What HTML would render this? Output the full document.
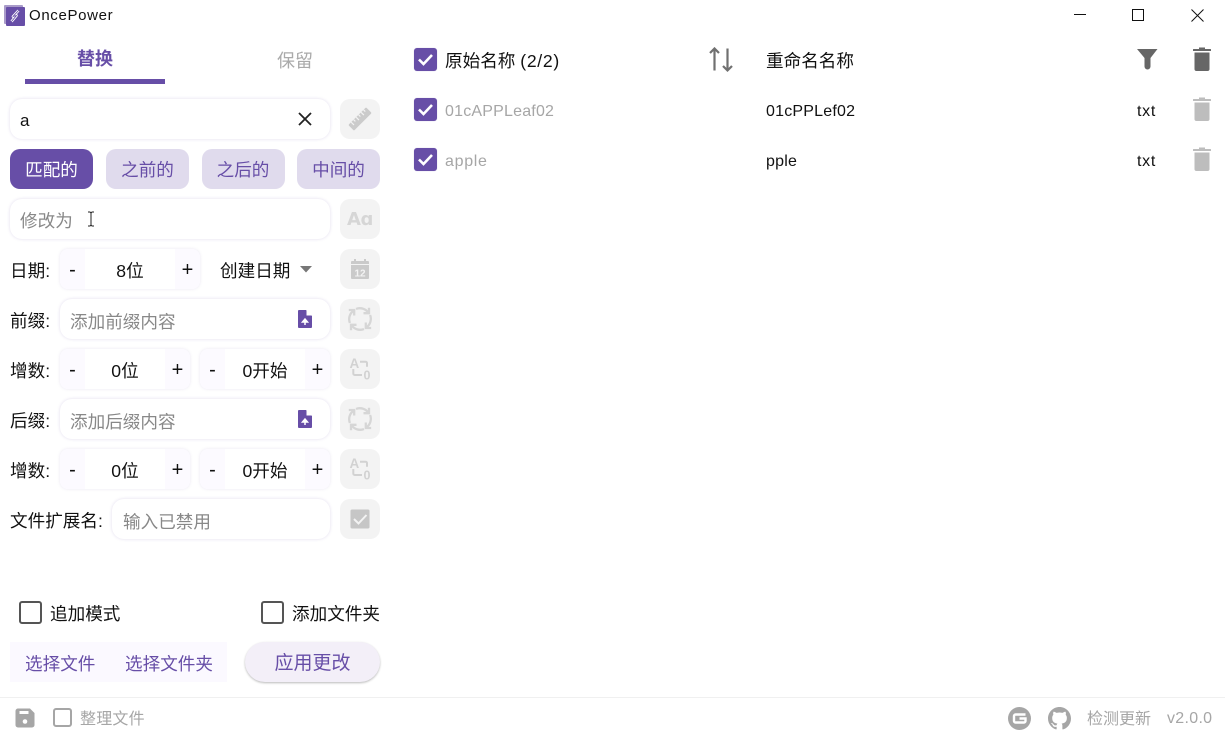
<!DOCTYPE html>
<html lang="zh"><head><meta charset="utf-8"><style>
html,body{margin:0;padding:0;width:1225px;height:736px;overflow:hidden;background:#fff}
body{position:relative;font-family:"Liberation Sans","Noto Sans CJK SC",sans-serif;font-size:17.6px;color:#111;font-weight:400}
.a{position:absolute;white-space:nowrap}
.t{position:absolute;white-space:nowrap;line-height:24px;height:24px}
.in{position:absolute;background:#fff;border-radius:12px;box-shadow:0 0 3px rgba(103,80,164,.2);height:40px}
.sq{position:absolute;left:340px;width:40px;height:40px;border-radius:10px;background:#f3f3f3}
.sq svg{position:absolute;left:0;top:0}
.b{position:absolute;top:149px;height:40px;width:83px;border-radius:10px;background:#e0dbed;color:#674ea7;text-align:center;line-height:43px}
.st{position:absolute;height:40px;background:#fff;border-radius:8px;box-shadow:0 0 3px rgba(103,80,164,.14);text-align:center;line-height:44px;overflow:hidden}
.st i{position:absolute;top:0;width:25px;height:40px;background:#fcfaff;font-style:normal;line-height:42px;font-size:20px}
.st i.l{left:0}.st i.r{right:0}
.ph{color:#888}
.cb{position:absolute;width:23px;height:23px;box-sizing:border-box;border:2.5px solid #555;border-radius:3px}
.ck{position:absolute;width:23px;height:23px;background:#674ea7;border-radius:3px;box-shadow:0 0 1px #c9bfe0}
.ck svg,.ic{position:absolute;left:0;top:0}
.g{color:#a6a6a6}
.l16{font-size:16px;letter-spacing:.2px}
</style></head><body>

<svg class="a" style="left:4px;top:5px" width="21" height="21" viewBox="0 0 21 21"><rect x="0" y="0" width="19" height="19" rx="1" fill="#a99bc9"/><rect x="2" y="2" width="19" height="19" rx="1" fill="#674ea7"/><path d="M14.500 5.500L9 11.500l3.500-1L7.500 16.500" fill="none" stroke="#fff" stroke-width="2.600" stroke-linejoin="round"/><path d="M14.500 5.500L9 11.500l3.500-1L7.500 16.500" fill="none" stroke="#674ea7" stroke-width=".9" stroke-linejoin="round"/></svg>
<div class="t" style="left:29px;top:4px;font-size:15px;letter-spacing:.65px">OncePower</div>

<svg class="a" style="left:1070px;top:5px" width="140" height="20" viewBox="0 0 140 20" fill="none" stroke="#111" stroke-width="1"><path d="M4 9.500H16"/><rect x="62.500" y="4.500" width="11" height="11"/><path d="M121.500 4.500L133.500 16.500M133.500 4.500L121.500 16.500"/></svg>

<div class="t" style="left:77px;top:47px;font-weight:700;font-size:18px;color:#674ea7">替换</div>
<div class="a" style="left:25px;top:79px;width:140px;height:5px;background:#674ea7"></div>
<div class="t" style="left:277px;top:49px;font-size:18px;color:#aaa">保留</div>

<!-- row 1 -->
<div class="in" style="left:10px;top:99px;width:320px"></div>
<div class="t" style="left:20px;top:109px;font-size:17px">a</div>
<svg class="a" style="left:296px;top:110px" width="18" height="18" viewBox="0 0 18 18"><path d="M3 3L15 15M15 3L3 15" stroke="#222" stroke-width="1.800" fill="none"/></svg>
<div class="sq" style="top:99px"><svg width="40" height="40" viewBox="0 0 40 40"><g transform="rotate(-45 20 20)"><rect x="7.500" y="16" width="25" height="8" rx="1" fill="#cbcbcb"/><path d="M11.500 16v4M15 16v2.500M18.500 16v4M22 16v2.500M25.500 16v4M29 16v2.500" stroke="#f3f3f3" stroke-width="1.200"/></g></svg></div>

<!-- row 2 -->
<div class="b" style="left:10px;background:#674ea7;color:#fff">匹配的</div>
<div class="b" style="left:106px">之前的</div>
<div class="b" style="left:201.500px">之后的</div>
<div class="b" style="left:297px">中间的</div>

<!-- row 3 -->
<div class="in" style="left:10px;top:199px;width:320px"></div>
<div class="t ph" style="left:20px;top:209px">修改为</div>
<svg class="a" style="left:86px;top:211px" width="10" height="16" viewBox="0 0 10 16"><path d="M2 1h2l1 1 1-1h2M5 2v12M2 15h2l1-1 1 1h2" fill="none" stroke="#222" stroke-width="1"/></svg>
<div class="sq" style="top:199px"><div class="a" style="left:7px;top:8px;font-size:18px;font-weight:700;color:#d6d6d6;line-height:26px;font-family:'DejaVu Sans',sans-serif;letter-spacing:-.4px">Aɑ</div></div>

<!-- date -->
<div class="t" style="left:10px;top:259px">日期:</div>
<div class="st" style="left:60px;top:249px;width:140px"><i class="l">-</i>8位<i class="r">+</i></div>
<div class="t" style="left:220px;top:259px">创建日期</div>
<svg class="a" style="left:299px;top:265px" width="14" height="9" viewBox="0 0 14 9"><path d="M1 1h12L7 7.500z" fill="#777"/></svg>
<div class="sq" style="top:249px"><svg width="40" height="40" viewBox="0 0 40 40"><rect x="11" y="12" width="18" height="18" rx="1" fill="#cacaca"/><path d="M15 10v4M25 10v4" stroke="#cacaca" stroke-width="2"/><path d="M11 15.500h18" stroke="#f3f3f3" stroke-width="1"/><text x="20" y="27.500" font-size="10" font-weight="700" fill="#f3f3f3" text-anchor="middle" font-family="Liberation Sans">12</text></svg></div>

<!-- prefix -->
<div class="t" style="left:10px;top:309px">前缀:</div>
<div class="in" style="left:60px;top:299px;width:270px"></div>
<div class="t ph" style="left:70px;top:310px">添加前缀内容</div>
<svg class="a" style="left:297px;top:309px" width="16" height="20" viewBox="0 0 16 20"><path d="M2 1h7l6 6v11a1 1 0 0 1-1 1H2a1 1 0 0 1-1-1V2a1 1 0 0 1 1-1z" fill="#674ea7"/><path d="M9.500 1v5.500H15" fill="#fff"/><path d="M8 16v-5M5.500 13L8 10l2.500 3z" stroke="#fff" stroke-width="1.500" fill="#fff"/></svg>
<div class="sq" style="top:299px"><svg width="40" height="40" viewBox="0 0 40 40" fill="none" stroke="#d6d6d6" stroke-width="2.300"><g id="r1"><path d="M16 9.900A10.500 10.500 0 0 1 28.300 13.500"/><path d="M23.500 14.200h5.500V8.800"/></g><g transform="rotate(90 20 20)"><path d="M16 9.900A10.500 10.500 0 0 1 28.300 13.500"/><path d="M23.500 14.200h5.500V8.800"/></g><g transform="rotate(180 20 20)"><path d="M16 9.900A10.500 10.500 0 0 1 28.300 13.500"/><path d="M23.500 14.200h5.500V8.800"/></g><g transform="rotate(270 20 20)"><path d="M16 9.900A10.500 10.500 0 0 1 28.300 13.500"/><path d="M23.500 14.200h5.500V8.800"/></g></svg></div>

<!-- inc 1 -->
<div class="t" style="left:10px;top:359px">增数:</div>
<div class="st" style="left:60px;top:349px;width:130px"><i class="l">-</i>0位<i class="r">+</i></div>
<div class="st" style="left:200px;top:349px;width:130px"><i class="l">-</i>0开始<i class="r">+</i></div>
<div class="sq" style="top:349px"><svg width="40" height="40" viewBox="0 0 40 40"><text x="9.500" y="19" font-size="13.500" font-weight="700" fill="#d2d2d2" font-family="Liberation Sans">A</text><text x="23.500" y="30.500" font-size="12.500" font-weight="700" fill="#d2d2d2" font-family="Liberation Sans">0</text><path d="M20 12.700h5.500a1.500 1.500 0 0 1 1.500 1.500v3.500M13.300 20v4.500a1.500 1.500 0 0 0 1.500 1.500H22" fill="none" stroke="#d2d2d2" stroke-width="2"/></svg></div>

<!-- suffix -->
<div class="t" style="left:10px;top:409px">后缀:</div>
<div class="in" style="left:60px;top:399px;width:270px"></div>
<div class="t ph" style="left:70px;top:410px">添加后缀内容</div>
<svg class="a" style="left:297px;top:409px" width="16" height="20" viewBox="0 0 16 20"><path d="M2 1h7l6 6v11a1 1 0 0 1-1 1H2a1 1 0 0 1-1-1V2a1 1 0 0 1 1-1z" fill="#674ea7"/><path d="M9.500 1v5.500H15" fill="#fff"/><path d="M8 16v-5M5.500 13L8 10l2.500 3z" stroke="#fff" stroke-width="1.500" fill="#fff"/></svg>
<div class="sq" style="top:399px"><svg width="40" height="40" viewBox="0 0 40 40" fill="none" stroke="#d6d6d6" stroke-width="2.300"><g><path d="M16 9.900A10.500 10.500 0 0 1 28.300 13.500"/><path d="M23.500 14.200h5.500V8.800"/></g><g transform="rotate(90 20 20)"><path d="M16 9.900A10.500 10.500 0 0 1 28.300 13.500"/><path d="M23.500 14.200h5.500V8.800"/></g><g transform="rotate(180 20 20)"><path d="M16 9.900A10.500 10.500 0 0 1 28.300 13.500"/><path d="M23.500 14.200h5.500V8.800"/></g><g transform="rotate(270 20 20)"><path d="M16 9.900A10.500 10.500 0 0 1 28.300 13.500"/><path d="M23.500 14.200h5.500V8.800"/></g></svg></div>

<!-- inc 2 -->
<div class="t" style="left:10px;top:459px">增数:</div>
<div class="st" style="left:60px;top:449px;width:130px"><i class="l">-</i>0位<i class="r">+</i></div>
<div class="st" style="left:200px;top:449px;width:130px"><i class="l">-</i>0开始<i class="r">+</i></div>
<div class="sq" style="top:449px"><svg width="40" height="40" viewBox="0 0 40 40"><text x="9.500" y="19" font-size="13.500" font-weight="700" fill="#d2d2d2" font-family="Liberation Sans">A</text><text x="23.500" y="30.500" font-size="12.500" font-weight="700" fill="#d2d2d2" font-family="Liberation Sans">0</text><path d="M20 12.700h5.500a1.500 1.500 0 0 1 1.500 1.500v3.500M13.300 20v4.500a1.500 1.500 0 0 0 1.500 1.500H22" fill="none" stroke="#d2d2d2" stroke-width="2"/></svg></div>

<!-- ext -->
<div class="t" style="left:10px;top:509px">文件扩展名:</div>
<div class="in" style="left:112px;top:499px;width:218px"></div>
<div class="t ph" style="left:123px;top:510px">输入已禁用</div>
<div class="sq" style="top:499px"><svg width="40" height="40" viewBox="0 0 40 40"><rect x="10.500" y="10.500" width="19" height="19" rx="1.500" fill="#c6c6c6"/><path d="M14 20l4.500 4.500L26.500 16" fill="none" stroke="#f3f3f3" stroke-width="2"/></svg></div>

<!-- bottom checks -->
<div class="cb" style="left:19px;top:601px"></div>
<div class="t" style="left:50px;top:602px">追加模式</div>
<div class="cb" style="left:261px;top:601px"></div>
<div class="t" style="left:292px;top:602px">添加文件夹</div>

<div class="a" style="left:10px;top:642px;width:217px;height:40px;background:#fbf9ff"></div>
<div class="t" style="left:25px;top:652px;color:#674ea7">选择文件</div>
<div class="t" style="left:125px;top:652px;color:#674ea7">选择文件夹</div>
<div class="a" style="left:245px;top:642px;width:135px;height:40px;border-radius:20px;background:#f3eff8;box-shadow:0 1px 2px rgba(0,0,0,.28);text-align:center;line-height:44px;color:#674ea7;font-size:19px">应用更改</div>

<!-- footer -->
<div class="a" style="left:0;top:697px;width:1225px;height:1px;background:#f0f0f0"></div>
<svg class="a" style="left:15px;top:708px" width="20" height="20" viewBox="0 0 20 20"><path d="M3 .500h12l4.500 4.500v12a2.500 2.500 0 0 1-2.500 2.500H3A2.500 2.500 0 0 1 .500 17V3A2.500 2.500 0 0 1 3 .500z" fill="#a6a6a6"/><rect x="4.500" y="3" width="9" height="3" fill="#fff"/><circle cx="10" cy="13.500" r="2.300" fill="#fff"/></svg>
<div class="cb" style="left:53px;top:708px;width:19px;height:19px;border-color:#a6a6a6;border-width:2px"></div>
<div class="t g" style="left:80px;top:708px;font-size:16px;letter-spacing:.2px">整理文件</div>

<svg class="a" style="left:1008px;top:707px" width="23" height="23" viewBox="0 0 23 23"><circle cx="11.500" cy="11.500" r="11.500" fill="#a6a6a6"/><path d="M17.500 7.500H7.500a1.500 1.500 0 0 0-1.500 1.500v5a1.500 1.500 0 0 0 1.500 1.500h8.500a1.500 1.500 0 0 0 1.500-1.500v-2.500H11.500" fill="none" stroke="#fff" stroke-width="2.400"/></svg>
<svg class="a" style="left:1048px;top:707px" width="23" height="23" viewBox="0 0 16 16"><path fill="#a6a6a6" d="M8 0C3.580 0 0 3.580 0 8c0 3.540 2.290 6.530 5.470 7.590.4.070.55-.17.55-.38 0-.19-.01-.82-.01-1.490-2.010.37-2.530-.49-2.690-.94-.09-.23-.48-.94-.82-1.130-.28-.15-.68-.52-.01-.53.630-.01 1.080.58 1.230.82.720 1.210 1.870.87 2.330.66.070-.52.280-.87.510-1.070-1.780-.2-3.640-.89-3.640-3.950 0-.87.310-1.590.82-2.150-.08-.2-.36-1.020.08-2.120 0 0 .67-.21 2.200.82.640-.18 1.320-.27 2-.27s1.360.09 2 .27c1.530-1.040 2.200-.82 2.200-.82.440 1.100.16 1.920.08 2.120.51.560.82 1.270.82 2.150 0 3.070-1.870 3.750-3.650 3.950.29.250.54.730.54 1.480 0 1.070-.01 1.930-.01 2.200 0 .21.150.46.550.38A8.010 8.010 0 0 0 16 8c0-4.420-3.580-8-8-8z"/></svg>
<div class="t g" style="left:1087px;top:708px;font-size:16px">检测更新</div>
<div class="t g" style="left:1167px;top:707px;font-size:16px;letter-spacing:.3px">v2.0.0</div>

<!-- table -->
<div class="ck" style="left:414px;top:48px"><svg width="23" height="23" viewBox="0 0 23 23"><path d="M5 11.500l4.500 4.500L18 7" fill="none" stroke="#fff" stroke-width="2.600"/></svg></div>
<div class="t" style="left:445px;top:49px">原始名称 <span style="letter-spacing:.7px">(2/2)</span></div>
<svg class="a" style="left:708px;top:47px" width="26" height="26" viewBox="0 0 26 26" fill="none" stroke="#707070" stroke-width="2.200"><path d="M6.500 23.500V1.500M2 6l4.500-4.500L11 6M19.500 1.500v22M15 19l4.500 4.500L24 19"/></svg>
<div class="t" style="left:766px;top:49px">重命名名称</div>
<svg class="a" style="left:1137px;top:48px" width="21" height="22" viewBox="0 0 21 22"><path d="M0 1h20.500l-7 9v8.500a3 3 0 0 1-6 0V10z" fill="#666"/></svg>
<svg class="a" style="left:1193px;top:47px" width="18" height="24" viewBox="0 0 18 24"><path d="M.5 2h17a.5.5 0 0 1 .5.5V4H0V2.500A.5.5 0 0 1 .5 2zM6 .5h6V2H6z" fill="#666"/><path d="M1.500 5.500h15V22a2 2 0 0 1-2 2h-11a2 2 0 0 1-2-2z" fill="#666"/></svg>

<div class="ck" style="left:414px;top:98px"><svg width="23" height="23" viewBox="0 0 23 23"><path d="M5 11.500l4.500 4.500L18 7" fill="none" stroke="#fff" stroke-width="2.600"/></svg></div>
<div class="t g l16" style="left:445px;top:100px">01cAPPLeaf02</div>
<div class="t l16" style="left:766px;top:100px">01cPPLef02</div>
<div class="t l16" style="left:1137px;top:100px;letter-spacing:.7px">txt</div>
<svg class="a" style="left:1193px;top:97px" width="18" height="24" viewBox="0 0 18 24"><path d="M.5 2h17a.5.5 0 0 1 .5.5V4H0V2.500A.5.5 0 0 1 .5 2zM6 .5h6V2H6z" fill="#bdbdbd"/><path d="M1.500 5.500h15V22a2 2 0 0 1-2 2h-11a2 2 0 0 1-2-2z" fill="#bdbdbd"/></svg>

<div class="ck" style="left:414px;top:148px"><svg width="23" height="23" viewBox="0 0 23 23"><path d="M5 11.500l4.500 4.500L18 7" fill="none" stroke="#fff" stroke-width="2.600"/></svg></div>
<div class="t g l16" style="left:445px;top:150px;letter-spacing:.7px">apple</div>
<div class="t l16" style="left:766px;top:150px">pple</div>
<div class="t l16" style="left:1137px;top:150px;letter-spacing:.7px">txt</div>
<svg class="a" style="left:1193px;top:147px" width="18" height="24" viewBox="0 0 18 24"><path d="M.5 2h17a.5.5 0 0 1 .5.5V4H0V2.500A.5.5 0 0 1 .5 2zM6 .5h6V2H6z" fill="#bdbdbd"/><path d="M1.500 5.500h15V22a2 2 0 0 1-2 2h-11a2 2 0 0 1-2-2z" fill="#bdbdbd"/></svg>

</body></html>
